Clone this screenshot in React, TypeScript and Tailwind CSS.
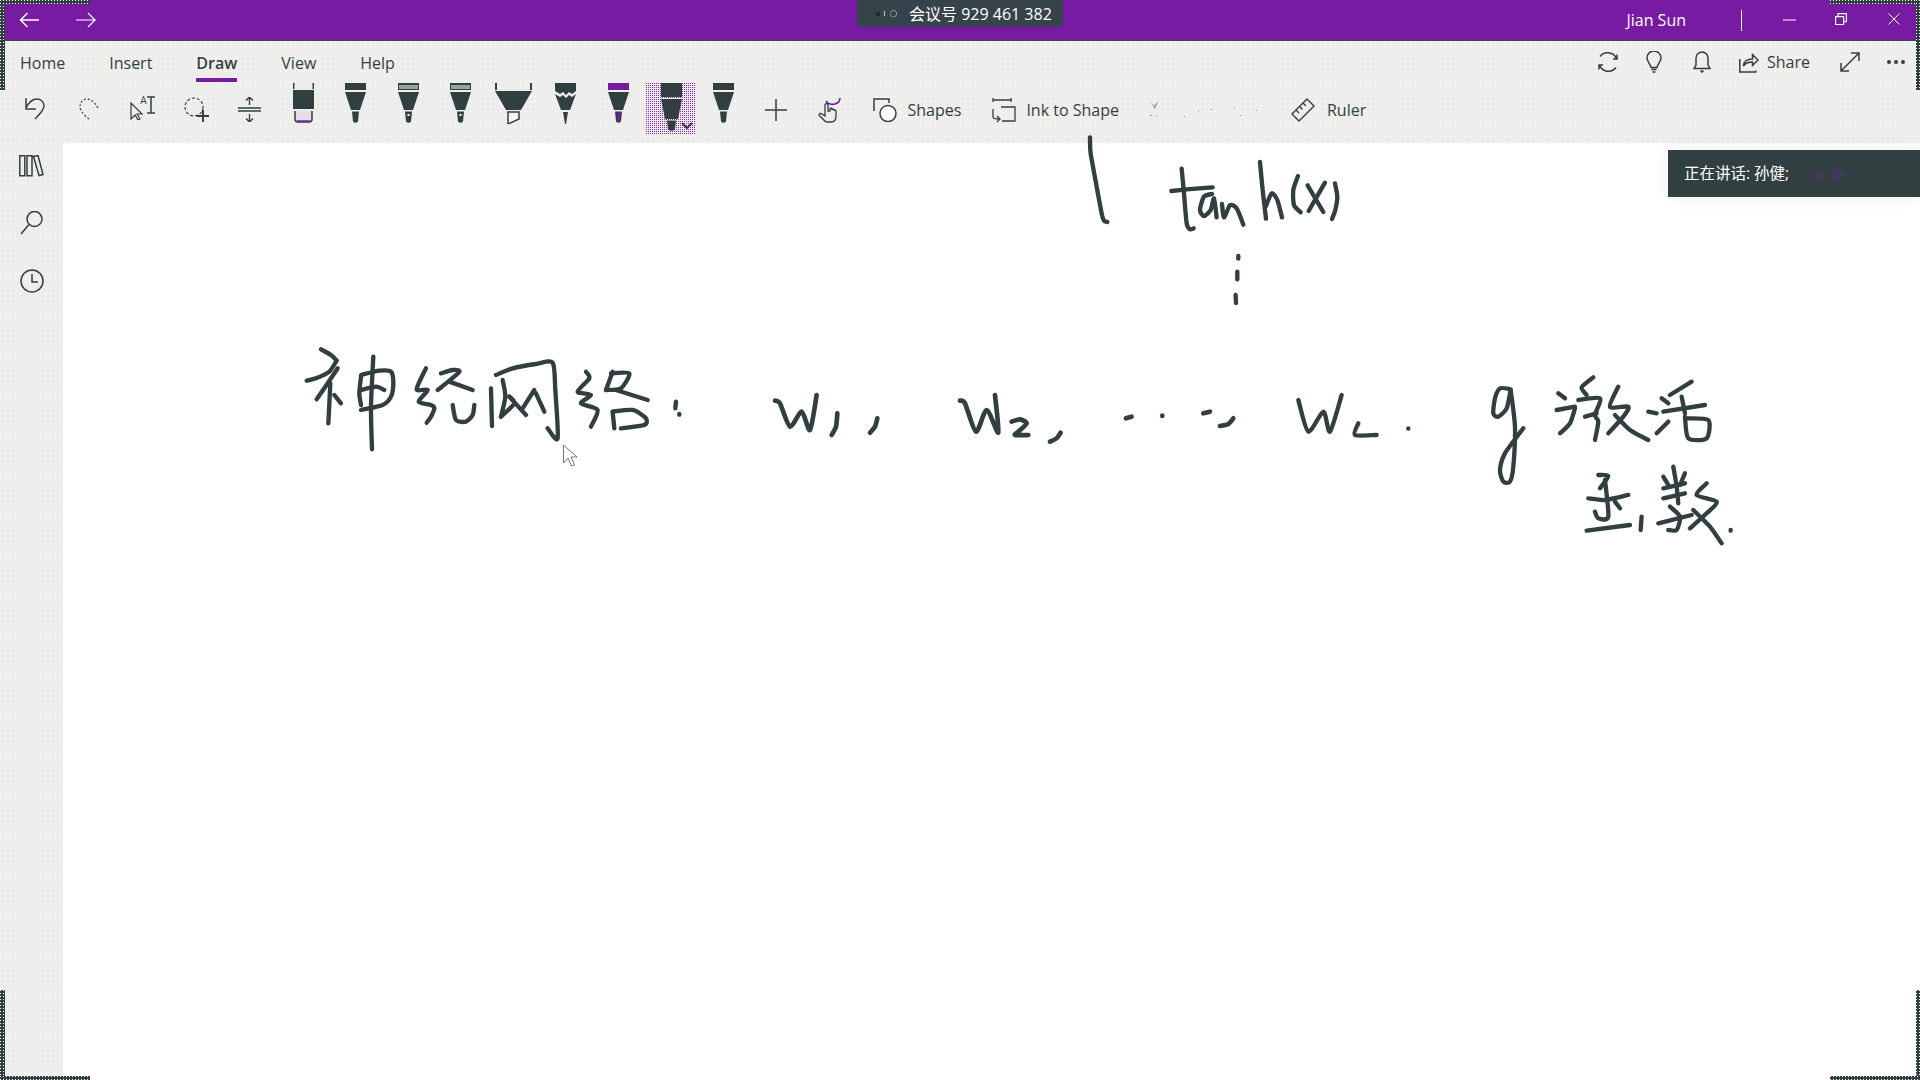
import React from 'react';

const INK = '#323f41';
const PURPLE = '#771ba3';

type Pt = number[];

// turn a flat list of x,y into a pen stroke that goes through every point
const stroke = (p: Pt) => {
  if (p.length <= 4) return `M${p[0]} ${p[1]}L${p[2] ?? p[0]} ${p[3] ?? p[1]}`;
  const at = (i: number) => {
    const k = Math.max(0, Math.min(p.length / 2 - 1, i));
    return [p[k * 2], p[k * 2 + 1]];
  };
  let d = `M${p[0]} ${p[1]}`;
  for (let i = 0; i < p.length / 2 - 1; i++) {
    const [x0, y0] = at(i - 1);
    const [x1, y1] = at(i);
    const [x2, y2] = at(i + 1);
    const [x3, y3] = at(i + 2);
    const t = 8;
    d += `C${x1 + (x2 - x0) / t} ${y1 + (y2 - y0) / t} ${x2 - (x3 - x1) / t} ${y2 - (y3 - y1) / t} ${x2} ${y2}`;
  }
  return d;
};

const InkGroup: React.FC<{ x: number; y: number; w?: number; strokes: Pt[] }> = ({ x, y, w = 10, strokes }) => (
  <g transform={`translate(${x} ${y}) scale(0.3333)`} fill="none" stroke={INK} strokeWidth={w} strokeLinecap="round" strokeLinejoin="round">
    {strokes.map((s, i) => (
      <path key={i} d={stroke(s)} />
    ))}
  </g>
);

const topInk: Pt[] = [
  [30, 22, 32, 70, 50, 170, 66, 255, 72, 272, 82, 276],
  [305, 116, 312, 190, 320, 280, 330, 298, 341, 295],
  [274, 183, 320, 178, 398, 172],
  [396, 192, 372, 200, 360, 240, 372, 258, 392, 240, 402, 205, 410, 262],
  [426, 222, 432, 262, 450, 226, 470, 235, 490, 284],
  [540, 96, 548, 180, 558, 266],
  [558, 228, 575, 190, 592, 210, 606, 262],
  [654, 138, 640, 180, 642, 225, 662, 247],
  [683, 166, 730, 246],
  [735, 158, 686, 243],
  [765, 160, 772, 200, 766, 240, 756, 267],
  [475, 378, 475, 386],
  [472, 425, 472, 448],
  [467, 495, 468, 519],
];

const netInk: Pt[] = [
  [75, 28, 105, 45, 122, 62],
  [122, 62, 100, 95, 60, 115, 32, 122],
  [125, 85, 95, 130, 62, 178],
  [103, 130, 97, 250],
  [115, 165, 135, 190],
  [195, 110, 190, 160, 195, 195],
  [195, 105, 250, 92, 285, 95, 292, 130, 285, 170, 260, 195, 195, 210],
  [195, 150, 240, 140, 265, 150],
  [232, 50, 225, 200, 228, 328],
  [390, 85, 362, 148, 395, 150, 368, 185, 405, 195, 415, 205, 405, 230, 392, 248],
  [435, 100, 470, 90, 490, 95, 450, 130, 425, 150],
  [460, 125, 530, 150],
  [470, 195, 480, 240, 510, 245, 530, 225, 535, 195],
  [585, 145, 588, 258],
  [600, 105, 650, 85, 720, 72, 770, 68, 778, 150, 785, 295, 755, 265],
  [620, 120, 628, 170, 615, 230],
  [615, 230, 655, 190, 640, 170, 690, 225],
  [715, 150, 680, 205],
  [720, 160, 745, 215],
  [870, 95, 880, 115, 845, 155, 885, 165, 855, 190, 905, 210, 885, 260],
  [950, 95, 930, 150],
  [945, 100, 1000, 100, 975, 145, 930, 150],
  [960, 150, 1055, 180],
  [950, 215, 955, 265],
  [950, 215, 1010, 210, 1050, 235, 1045, 255, 975, 265],
  [1140, 185, 1138, 205],
  [1150, 222, 1150, 224],
];

const weightInk: Pt[] = [
  [45, 62, 60, 70, 90, 140, 125, 95, 150, 150, 170, 45],
  [232, 100, 228, 140, 215, 165],
  [352, 115, 345, 140, 330, 158],
  [600, 62, 615, 70, 648, 155, 680, 90, 715, 158, 705, 45],
  [755, 125, 780, 118, 800, 130, 775, 155, 765, 165, 805, 165],
  [902, 158, 890, 175, 870, 185],
  [1098, 115, 1115, 110],
  [1207, 107, 1207, 108],
  [1330, 100, 1350, 95],
  [1380, 138, 1405, 132, 1420, 115],
];

const rightInk: Pt[] = [
  [55, 90, 85, 185, 130, 125, 150, 185, 185, 75],
  [235, 160, 225, 195, 290, 195],
  [385, 175, 385, 176],
  [692, 58, 660, 55, 645, 85, 640, 130, 655, 140, 680, 115, 692, 60],
  [692, 60, 705, 170, 700, 290, 690, 335, 670, 335, 660, 300, 675, 250, 730, 175],
  [835, 70, 855, 85],
  [830, 120, 885, 110],
  [885, 115, 870, 160, 840, 190],
  [940, 22, 905, 52, 920, 75],
  [895, 90, 960, 85, 945, 135, 955, 155, 945, 210],
  [915, 140, 950, 130],
  [1015, 50, 990, 110, 1045, 110, 1030, 140, 985, 190],
  [1005, 135, 1050, 180, 1105, 210],
  [1145, 85, 1165, 100],
  [1105, 125, 1130, 130],
  [1165, 155, 1130, 190],
  [1235, 35, 1170, 75],
  [1150, 125, 1275, 105],
  [1205, 80, 1215, 130],
  [1215, 140, 1225, 205, 1280, 205, 1285, 150, 1215, 145],
  [955, 315, 985, 318, 960, 355],
  [925, 385, 975, 390, 1045, 375],
  [975, 330, 985, 440, 955, 445, 945, 425],
  [1005, 395, 1020, 415],
  [920, 482, 1050, 465],
  [1085, 440, 1082, 480],
  [1180, 290, 1190, 350, 1195, 400],
  [1150, 355, 1215, 340],
  [1150, 385, 1215, 370],
  [1215, 310, 1200, 345],
  [1150, 320, 1165, 345],
  [1135, 460, 1235, 435],
  [1170, 410, 1200, 440, 1190, 480, 1165, 480],
  [1280, 340, 1250, 375, 1310, 395, 1280, 430, 1230, 475],
  [1240, 420, 1290, 470, 1325, 520],
  [1352, 480, 1352, 482],
];

const Pen: React.FC<{ kind?: 'solid' | 'grainy' | 'zigzag' | 'purple' }> = ({ kind = 'solid' }) => (
  <svg width="22" height="41" viewBox="0 0 22 41" fill={INK}>
    {kind === 'zigzag' ? (
      <>
        <path d="M0 0h21v8l-4 3-3-2-3 3-3-3-3 2-5-3z" />
        <path d="M0 11l5 3 3-2 3 3 3-3 3 2 4-3-6 16h-9z" />
        <path d="M8 29h5l-2 12h-1z" />
      </>
    ) : (
      <>
        <rect width="21" height="7" fill={kind === 'purple' ? PURPLE : INK} />
        {kind === 'grainy' && <rect x="1" y="2" width="19" height="4" fill="#9aa3a3" />}
        <path d="M0 9h21l-6 18H6z" />
        <path d="M7 28.5h7l-1 10q-2.500 2.500-5 0z" />
        {kind === 'grainy' && <rect x="9.500" y="31" width="2" height="2" fill="#fff" />}
        {kind === 'purple' && <rect x="9.500" y="29" width="2.500" height="9" fill={PURPLE} />}
      </>
    )}
  </svg>
);

const Eraser = () => (
  <svg width="22" height="41" viewBox="0 0 22 41" fill={INK}>
    <rect x="0" y="0" width="1.500" height="6" />
    <rect x="19.500" y="0" width="1.500" height="6" />
    <rect x="0" y="7" width="21" height="19" />
    <path d="M2 28v8q0 3 3 3h11q3 0 3-3v-8" fill="#e6dbe9" stroke={INK} strokeWidth="1.500" />
    <path d="M4 38h13" stroke={PURPLE} strokeWidth="1.500" />
  </svg>
);

const Highlighter = () => (
  <svg width="38" height="41" viewBox="0 0 38 41" fill={INK}>
    <rect x="0" y="0" width="2" height="7" />
    <rect x="35" y="0" width="2" height="7" />
    <path d="M0 8h37L26 27H11z" />
    <path d="M13 29h11v7l-11 5z" fill="#f4f4f2" stroke={INK} strokeWidth="1.500" />
  </svg>
);

const SelectedPen = () => (
  <svg width="22" height="48" viewBox="0 0 22 48" fill={INK}>
    <rect width="21" height="14" />
    <path d="M0 16h21l-4 20H4z" />
    <path d="M6 37.500h9l-1 9q-3.500 2.500-7 0z" />
  </svg>
);

const Line: React.FC<{ w: number; h: number; d: string; sw?: number; color?: string }> = ({ w, h, d, sw = 1.5, color = INK }) => (
  <svg width={w} height={h} viewBox={`0 0 ${w} ${h}`} fill="none" stroke={color} strokeWidth={sw}>
    <path d={d} />
  </svg>
);

const Cell: React.FC<{ className?: string; children: React.ReactNode }> = ({ className = '', children }) => (
  <div className={`flex justify-center ${className}`}>{children}</div>
);

const dots = 'bg-[conic-gradient(from_270deg_at_1px_1px,#ffffff_25%,transparent_0)] bg-size-[5px_5px]';
const band = 'absolute bg-[#323f41] bg-[conic-gradient(from_270deg_at_1px_1px,#ffffff_25%,transparent_0)] bg-size-[3px_3px]';

export default function App() {
  return (
    <div className="relative flex h-[1080px] w-[1920px] flex-col overflow-hidden bg-white font-['Open_Sans','Noto_Sans_CJK_SC',sans-serif] text-[16px] text-[#323f41]">
      {/* title bar */}
      <header className="flex h-[41px] shrink-0 items-center border-b border-[#3c4a4e] bg-[#771ba3] text-white">
        <div className="ml-[19px]">
          <Line w={21} h={16} color="#fff" d="M20 8H1.500M8.500 1L1.500 8l7 7" />
        </div>
        <div className="ml-[36px]">
          <Line w={21} h={16} color="#fff" sw={1.2} d="M0 8h19M12 1l7 7-7 7" />
        </div>
        <span className="ml-auto text-[16px] leading-none">Jian Sun</span>
        <div className="ml-[55px] h-[21px] w-px bg-white" />
        <div className="ml-[41px]">
          <Line w={13} h={2} color="#fff" sw={1} d="M0 1h13" />
        </div>
        <div className="mb-[3px] ml-[39px]">
          <Line w={12} h={12} color="#fff" sw={1.2} d="M.6 3.600h8v8h-8zM3 3.600V.6h8.400v8H8.600" />
        </div>
        <div className="mb-[3px] ml-[41px] mr-[20px]">
          <Line w={12} h={12} color="#fff" sw={1} d="M.5.5l11 11M11.500.5l-11 11" />
        </div>
      </header>

      {/* ribbon */}
      <section className={`h-[102px] shrink-0 bg-[#ededeb] ${dots}`}>
        <div className="flex h-[42px] items-start pl-[20px]">
          <nav className="flex gap-[44px] pt-[11px] leading-[22px]">
            <span>Home</span>
            <span>Insert</span>
            <span className="border-b-4 border-[#771ba3] pb-[4px] font-semibold">Draw</span>
            <span>View</span>
            <span>Help</span>
          </nav>
          <div className="ml-auto flex h-[42px] items-center">
            <Line w={22} h={22} d="M19.500 8A9.500 9.500 0 0 0 3 5.500M2.500 14A9.500 9.500 0 0 0 19 16.500M16 8h4V3.500M6 14H2v4.500" />
            <div className="ml-[27px]">
              <Line w={16} h={22} d="M5 16.500C4 12 1 10.500 1 7a7 7 0 0 1 14 0c0 3.500-3 5-4 9.500zM5.500 18.500h5M6.500 21h3" />
            </div>
            <div className="ml-[31px]">
              <Line w={18} h={22} d="M1 17.500h16L15 14V7a6 6 0 0 0-12 0v7zM7.500 19.500l1.500 1.500 1.500-1.500" />
            </div>
            <div className="ml-[28px]">
              <Line w={20} h={22} d="M.8 8v13h16v-1.500M4.500 15c.5-5 4-7 9-7V3.500l5.500 5.500-5.500 5.500V11c-4 0-7 1-9 4z" />
            </div>
            <span className="ml-[8px]">Share</span>
            <div className="ml-[30px]">
              <Line w={20} h={20} d="M1 19L19 1M11 1h8v8M1 11v8h8" />
            </div>
            <div className="ml-[27px] mr-[15px] flex gap-[3px]">
              <i className="size-[4px] rounded-full bg-[#323f41]" />
              <i className="size-[4px] rounded-full bg-[#323f41]" />
              <i className="size-[4px] rounded-full bg-[#323f41]" />
            </div>
          </div>
        </div>

        <div className="flex h-[52px] items-start pl-[8px]">
          <Cell className="mt-[13px] w-[54px]">
            <Line w={22} h={25} d="M2 2v11h10M2 12c3-6 7-9 11-9 5 0 7 4 7 7 0 4-5 9-9 13" />
          </Cell>
          <Cell className="mt-[14px] w-[54px]">
            <svg width="22" height="24" viewBox="0 0 22 24" fill="none" stroke="#323f41" strokeWidth="1.200" strokeDasharray="2 2">
              <path d="M20 11C16 4 12 2 9 2 4 2 2 6 2 10c0 4 5 9 9 12" />
            </svg>
          </Cell>
          <Cell className="mt-[13px] w-[54px]">
            <div className="flex items-start">
              <Line w={14} h={24} sw={1.2} d="M1 7v16l4-4 3 5 2-1-3-5h5z" />
              <span className="-ml-[4px] -mt-[1px] text-[10px] leading-none">A</span>
              <Line w={9} h={18} d="M0 1h8M0 17h8M4 1v16" />
            </div>
          </Cell>
          <Cell className="mt-[14px] w-[54px]">
            <svg width="26" height="26" viewBox="0 0 26 26" fill="none" stroke="#323f41">
              <circle cx="10" cy="10" r="9" strokeDasharray="3 2" strokeWidth="1.200" />
              <path d="M19 13v12M13 19h12" strokeWidth="2" />
            </svg>
          </Cell>
          <Cell className="mt-[14px] w-[50px]">
            <Line w={23} h={25} sw={1.4} d="M0 11h23M0 14h23M11.500 0v8M8 3.500L11.500 0 15 3.500M11.500 17v8M8 21.500l3.500 3.500 3.500-3.500" />
          </Cell>
          <Cell className="w-[56px] pl-[3px]"><Eraser /></Cell>
          <Cell className="w-[52.5px]"><Pen /></Cell>
          <Cell className="w-[52.5px]"><Pen kind="grainy" /></Cell>
          <Cell className="w-[52.5px]"><Pen kind="grainy" /></Cell>
          <Cell className="w-[52.5px]"><Highlighter /></Cell>
          <Cell className="w-[52.5px]"><Pen kind="zigzag" /></Cell>
          <Cell className="w-[52.5px]"><Pen kind="purple" /></Cell>
          <Cell className="w-[52.5px]">
            <div className="relative h-[52px] w-[50px] bg-[#efe9f0] bg-[conic-gradient(from_270deg_at_1px_1px,#8a2bb5_25%,transparent_0)] bg-size-[2px_2px] pl-[15px]">
              <SelectedPen />
              <div className="absolute left-[35px] top-[39px]">
                <Line w={12} h={8} sw={2} d="M1 1l5 5 5-5" />
              </div>
            </div>
          </Cell>
          <Cell className="w-[52.5px]"><Pen /></Cell>
          <Cell className="mt-[16px] w-[52.5px]">
            <Line w={22} h={22} d="M11 0v22M0 11h22" />
          </Cell>
          <Cell className="mt-[14px] w-[54px]">
            <svg width="24" height="26" viewBox="0 0 24 26" fill="none" stroke="#323f41" strokeWidth="1.300">
              <path d="M8 4c2 3 6 4 9 3 3-1 5-3 5-6" stroke="#771ba3" strokeWidth="1.600" />
              <path d="M7 8c0-2 3-2 3 0v6h2v-2c0-1 2-1 2 0v1c0-1 2-1 2 0v1c0-1 2-1 2 0v5c0 4-2 6-5 6H9c-2 0-3-2-8-7 0-2 2-2 3-1l3 2z" />
            </svg>
          </Cell>
          <div className="mt-[14px] ml-[16px] flex h-[26px] items-center">
            <svg width="24" height="24" viewBox="0 0 24 24" fill="none" stroke="#323f41" strokeWidth="1.500">
              <path d="M1 13V1h15v4" />
              <circle cx="15" cy="15.500" r="8" fill="#fff" />
            </svg>
            <span className="ml-[11px]">Shapes</span>
          </div>
          <div className="mt-[14px] ml-[31px] flex h-[26px] items-center">
            <svg width="24" height="26" viewBox="0 0 24 26" fill="none" stroke="#323f41" strokeWidth="1.300">
              <path d="M1 3h18M1 1v4M19 1v4M9 10h14v14H10M1 12v8c0 2 3 2 6 2M5 19l3 3-3 3" />
            </svg>
            <span className="ml-[10px]">Ink to Shape</span>
          </div>
          <div className="mt-[16px] ml-[31px] h-[22px] w-[118px]">
            <svg width="118" height="22" viewBox="0 0 118 22" fill="#7b3aa8" opacity="0.6">
              <path d="M0 2l4 5 4-5-3 8z" />
              <rect x="0" y="16" width="2" height="1" />
              <rect x="6" y="16" width="1" height="1" />
              <rect x="34" y="17" width="1" height="1" />
              <rect x="48" y="12" width="1" height="1" />
              <rect x="61" y="10" width="1" height="1" />
              <rect x="84" y="9" width="1" height="1" />
              <rect x="90" y="16" width="1" height="1" />
              <rect x="106" y="11" width="1" height="1" />
            </svg>
          </div>
          <div className="mt-[14px] ml-[23px] flex h-[26px] items-center">
            <Line w={24} h={24} sw={1.4} d="M1 16L16 1l7 7L8 23zM5 12l3 3M8.500 8.500l3 3M12 5l3 3" />
            <span className="ml-[12px]">Ruler</span>
          </div>
        </div>
      </section>

      {/* left rail + page */}
      <div className="flex min-h-0 flex-1">
        <aside className={`flex w-[63px] shrink-0 flex-col items-center bg-[#ededeb] ${dots}`}>
          <div className="mt-[12px] ml-[-1px]">
            <Line w={25} h={22} d="M.8.800h5v20h-5zM8 .8h5v20H8zM14.500 1.500l4.500-1 5 19-4 1z" />
          </div>
          <div className="mt-[34px]">
            <Line w={23} h={24} d="M22 8a7.500 7.500 0 1 1-15 0 7.500 7.500 0 0 1 15 0zM9 13.500L1 23" />
          </div>
          <div className="mt-[34px]">
            <Line w={24} h={24} d="M23 12a11 11 0 1 1-22 0 11 11 0 0 1 22 0zM12 5v8h6" />
          </div>
        </aside>
        <main className="flex-1 bg-white" />
      </div>

      {/* handwritten ink on the page */}
      <svg className="pointer-events-none absolute left-0 top-0" width="1920" height="1080" viewBox="0 0 1920 1080">
        <InkGroup x={1080} y={130} w={13} strokes={topInk} />
        <InkGroup x={296} y={340} w={13} strokes={netInk} />
        <InkGroup x={760} y={380} w={14} strokes={weightInk} />
        <InkGroup x={1280} y={370} w={13} strokes={rightInk} />
        <path d="M563.500 445v18l4.500-5 3.500 8 3-1-3.500-8h6z" fill="#fff" stroke="#6f7778" strokeWidth="1" />
      </svg>

      {/* shared-screen overlays */}
      <div className="absolute left-[857px] top-0 flex h-[27px] w-[206px] items-center rounded-b-[3px] bg-[#37434a] pl-[19px] text-white">
        <i className="size-[4px] bg-[#1f2a2c]" />
        <i className="ml-[4px] h-[5px] w-px bg-white/70" />
        <i className="ml-[5px] size-[7px] rounded-full border border-dotted border-white/80" />
        <span className="ml-[12px] text-[16px] leading-none">会议号 929 461 382</span>
      </div>

      <div className="absolute left-[1668px] top-[150px] flex h-[47px] w-[252px] items-center bg-[#323f41] pl-[16px] text-[15.5px] text-white shadow-[0_0_16px_rgba(0,0,0,0.08)]">
        <span>正在讲话: 孙健;</span>
        <svg className="ml-[22px] mt-[4px]" width="36" height="18" viewBox="0 0 36 18" fill="#5a2f86" opacity="0.35">
          <path d="M7 1l7 8-7 8-7-8zM26 0l9 8-9 8-8-8z" />
        </svg>
      </div>

      <div className={`${band} left-0 top-0 h-[4px] w-[90px]`} />
      <div className={`${band} left-0 top-0 h-[90px] w-[5px]`} />
      <div className={`${band} right-0 top-0 h-[4px] w-[90px]`} />
      <div className={`${band} right-0 top-0 h-[90px] w-[4px]`} />
      <div className={`${band} bottom-0 left-0 h-[90px] w-[5px]`} />
      <div className={`${band} bottom-0 left-0 h-[4px] w-[90px]`} />
      <div className={`${band} bottom-0 right-0 h-[90px] w-[4px]`} />
      <div className={`${band} bottom-0 right-0 h-[4px] w-[90px]`} />
    </div>
  );
}
